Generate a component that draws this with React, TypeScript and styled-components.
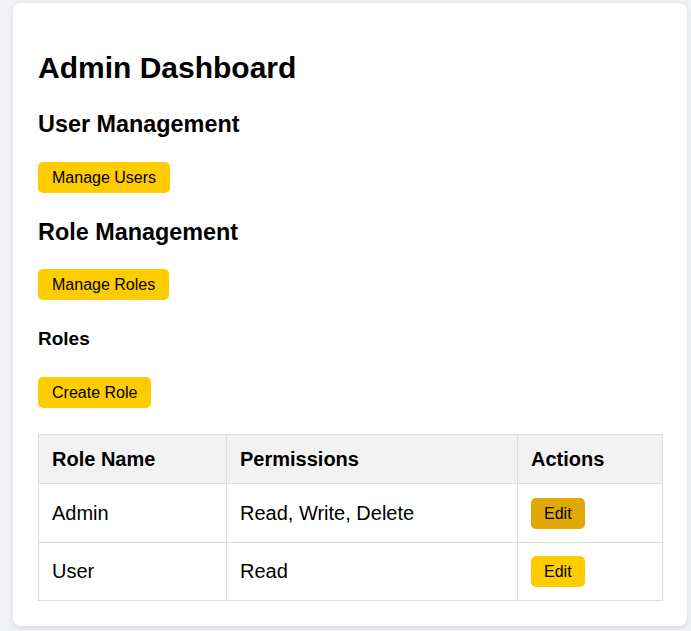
import React from "react";
import styled, { createGlobalStyle } from "styled-components";

const GlobalStyle = createGlobalStyle`
  html, body {
    margin: 0;
    padding: 0;
    background: #f0f2f5;
    font-family: "Liberation Sans", Arial, Helvetica, sans-serif;
    color: #000;
  }
`;

const Page = styled.div`
  display: flex;
  align-items: flex-start;
  padding: 3px 4px 0 13px;
  min-height: 100vh;
  box-sizing: border-box;
  background: #f0f2f5;
`;

const Card = styled.div`
  flex: 1;
  background: #fff;
  border-radius: 8px;
  box-shadow: 0 2px 6px rgba(0, 0, 0, 0.1);
  padding: 47px 24px 25px 25px;
`;

const Title = styled.h1`
  font-size: 30px;
  line-height: 36px;
  font-weight: bold;
  margin: 0 0 23.5px;
`;

const SectionTitle = styled.h2<{ $after: number }>`
  font-size: 23.4px;
  line-height: 28px;
  font-weight: bold;
  margin: 0 0 ${(p) => p.$after}px;
`;

const SubTitle = styled.h3`
  font-size: 19px;
  line-height: 22px;
  font-weight: bold;
  margin: 0 0 27px;
`;

const Section = styled.section<{ $gap: number }>`
  margin-bottom: ${(p) => p.$gap}px;
`;

const Button = styled.button<{ $active?: boolean; $small?: boolean }>`
  display: inline-block;
  font-family: "Liberation Sans", Arial, Helvetica, sans-serif;
  font-size: 16px;
  line-height: 19px;
  padding: 6px ${(p) => (p.$small ? 13 : 14)}px;
  border: none;
  border-radius: 5px;
  color: #000;
  background: ${(p) => (p.$active ? "#e0a800" : "#ffcc00")};
  cursor: pointer;
  vertical-align: middle;
`;

const Table = styled.table`
  width: 100%;
  table-layout: fixed;
  border-collapse: collapse;
  margin-top: 26px;
`;

const HeadCell = styled.th`
  text-align: left;
  font-size: 20px;
  line-height: 23px;
  font-weight: bold;
  padding: 13px 13px 12px;
  background: #f2f2f2;
  border: 1px solid #ddd;
`;

const Cell = styled.td`
  text-align: left;
  font-size: 20px;
  line-height: 23px;
  padding: 13.5px 13px 13px;
  border: 1px solid #ddd;
  vertical-align: middle;
`;

const Row = styled.tr``;

const roles = [
  { name: "Admin", permissions: "Read, Write, Delete", active: true },
  { name: "User", permissions: "Read", active: false },
];

export default function App() {
  return (
    <>
      <GlobalStyle />
      <Page>
        <Card>
          <Title>Admin Dashboard</Title>
          <Section $gap={25}>
            <SectionTitle $after={24.5}>User Management</SectionTitle>
            <Button>Manage Users</Button>
          </Section>
          <Section $gap={28}>
            <SectionTitle $after={23}>Role Management</SectionTitle>
            <Button>Manage Roles</Button>
          </Section>
          <Section $gap={0}>
            <SubTitle>Roles</SubTitle>
            <Button>Create Role</Button>
          </Section>
          <Table>
            <colgroup>
              <col style={{ width: 188 }} />
              <col style={{ width: 291 }} />
              <col />
            </colgroup>
            <thead>
              <Row>
                <HeadCell>Role Name</HeadCell>
                <HeadCell>Permissions</HeadCell>
                <HeadCell>Actions</HeadCell>
              </Row>
            </thead>
            <tbody>
              {roles.map((r) => (
                <Row key={r.name}>
                  <Cell>{r.name}</Cell>
                  <Cell>{r.permissions}</Cell>
                  <Cell>
                    <Button $active={r.active} $small>
                      Edit
                    </Button>
                  </Cell>
                </Row>
              ))}
            </tbody>
          </Table>
        </Card>
      </Page>
    </>
  );
}
